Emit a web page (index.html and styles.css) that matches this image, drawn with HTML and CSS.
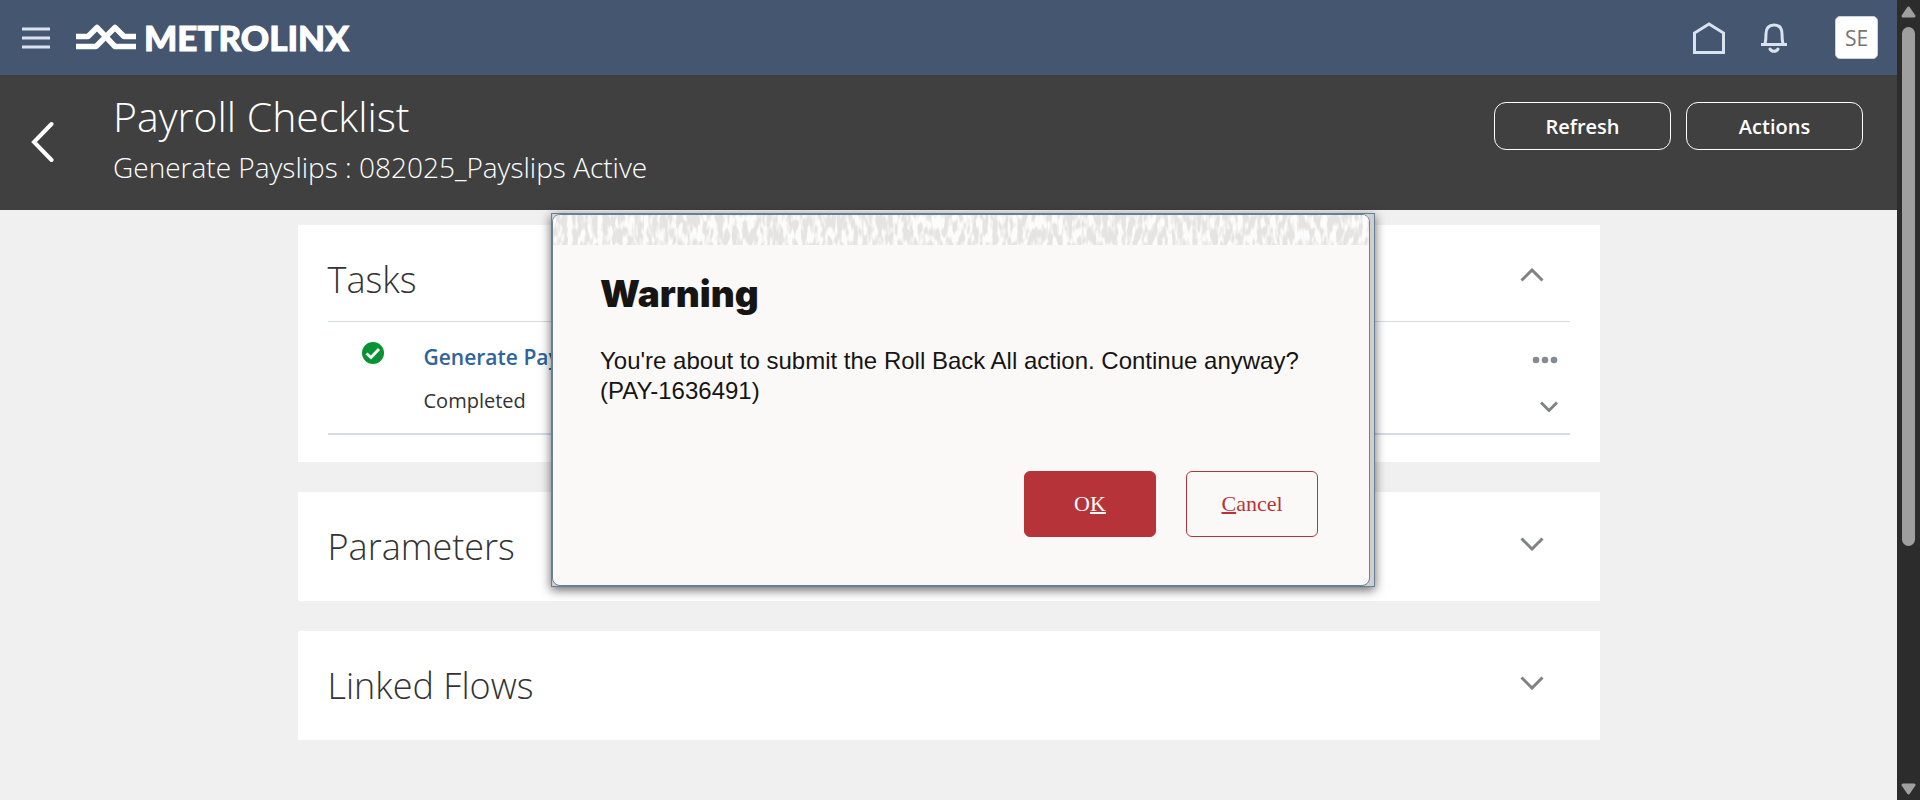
FILE: index.html
```html
<!DOCTYPE html>
<html lang="en">
<head>
<meta charset="utf-8">
<meta name="viewport" content="width=device-width, initial-scale=1">
<title>Payroll Checklist</title>
<link rel="stylesheet" href="styles.css">
</head>
<body>
<div class="page">
  <header class="topbar">
    <button class="icon-btn menu" aria-label="Navigator">
      <svg width="28" height="22" viewBox="0 0 28 22" stroke="#d9e2ef" stroke-width="3"><path d="M0 2h28M0 11h28M0 20h28"/></svg>
    </button>
    <a class="brand" href="#">
      <svg width="62" height="26" viewBox="0 0 62 26" fill="none" stroke="#fff" stroke-width="5.5" stroke-linejoin="round"><path d="M1 12.500H13L22 3.500L40 22.500H61"/><path d="M1 22.500H21L40 3.500L49 12.500H61"/></svg>
      <span>METROLINX</span>
    </a>
    <nav class="tools">
      <button class="icon-btn" aria-label="Home">
        <svg width="34" height="34" viewBox="0 0 34 34" fill="none" stroke="#d9e2ef" stroke-width="3"><path d="M2.500 31.500V12L17 3L31.500 12V31.500Z"/></svg>
      </button>
      <button class="icon-btn bell" aria-label="Notifications">
        <svg width="26" height="30" viewBox="0 0 26 30" fill="none" stroke="#d9e2ef" stroke-width="3"><path d="M0 21.500H26M4 21C5 17 5 15 5 11C5 5 8 2 13 2S21 5 21 11C21 15 21 17 22 21"/><path d="M9 26C10.500 29 15.500 29 17 26" stroke-linecap="round"/></svg>
      </button>
      <button class="avatar">SE</button>
    </nav>
  </header>
  <section class="titlebar">
    <button class="icon-btn back" aria-label="Back">
      <svg width="24" height="44" viewBox="0 0 24 44" fill="none" stroke="#fff" stroke-width="4" stroke-linecap="round"><path d="M21.500 4L4 22L21.500 40"/></svg>
    </button>
    <div class="titles">
      <h1>Payroll Checklist</h1>
      <p>Generate Payslips : 082025_Payslips Active</p>
    </div>
    <div class="actions">
      <button class="outline-btn">Refresh</button>
      <button class="outline-btn">Actions</button>
    </div>
  </section>
  <main class="cards">
    <section class="card tasks">
      <div class="card-head">
        <h2>Tasks</h2>
        <button class="icon-btn" aria-label="Collapse Tasks"><svg width="24" height="14" viewBox="0 0 24 14" class="chev"><path d="M1.500 12.500L12 2L22.500 12.500"/></svg></button>
      </div>
      <div class="task">
        <svg class="status" width="22" height="22" viewBox="0 0 22 22"><circle cx="11" cy="11" r="11" fill="#069334"/><path d="M4.500 11.500L9 15.500L17 7" fill="none" stroke="#fff" stroke-width="3"/></svg>
        <div class="task-text">
          <a href="#">Generate Payslips</a>
          <span>Completed</span>
        </div>
        <div class="task-tools">
          <button class="icon-btn" aria-label="Task actions"><svg width="26" height="8" viewBox="0 0 26 8" fill="#858b8f"><circle cx="4" cy="4" r="3.300"/><circle cx="13" cy="4" r="3.300"/><circle cx="22" cy="4" r="3.300"/></svg></button>
          <button class="icon-btn" aria-label="Show details"><svg width="18" height="12" viewBox="0 0 18 12" class="chev"><path d="M1 1.500L9 9.500L17 1.500"/></svg></button>
        </div>
      </div>
    </section>
    <section class="card">
      <div class="card-head">
        <h2>Parameters</h2>
        <button class="icon-btn" aria-label="Expand Parameters"><svg width="24" height="14" viewBox="0 0 24 14" class="chev"><path d="M1.500 1.500L12 12L22.500 1.500"/></svg></button>
      </div>
    </section>
    <section class="card">
      <div class="card-head">
        <h2>Linked Flows</h2>
        <button class="icon-btn" aria-label="Expand Linked Flows"><svg width="24" height="14" viewBox="0 0 24 14" class="chev"><path d="M1.500 1.500L12 12L22.500 1.500"/></svg></button>
      </div>
    </section>
  </main>
</div>
<div class="scrollbar" aria-hidden="true">
  <svg width="15" height="12" viewBox="0 0 15 12"><path d="M7.500 2L13 10H2Z" fill="#9f9f9f" stroke="#9f9f9f" stroke-width="3" stroke-linejoin="round"/></svg>
  <div class="track"><div class="thumb"></div></div>
  <svg width="15" height="12" viewBox="0 0 15 12"><path d="M7.500 10L13 2H2Z" fill="#9f9f9f" stroke="#9f9f9f" stroke-width="3" stroke-linejoin="round"/></svg>
</div>
<div class="dialog" role="alertdialog" aria-labelledby="dlg-title" aria-describedby="dlg-text">
  <div class="dialog-panel">
    <svg class="texture" width="100%" height="30" aria-hidden="true">
      <filter id="grain" x="0" y="0" width="100%" height="100%">
        <feTurbulence type="fractalNoise" baseFrequency="0.2 0.07" numOctaves="2" seed="4"/>
        <feColorMatrix values="0 0 0 0 0.98  0 0 0 0 0.975  0 0 0 0 0.97  5 0 0 0 -2.1"/>
      </filter>
      <rect width="100%" height="30" fill="#e5e4e3"/>
      <rect width="100%" height="30" filter="url(#grain)"/>
    </svg>
    <div class="dialog-body">
      <h2 id="dlg-title">Warning</h2>
      <p id="dlg-text">You're about to submit the Roll Back All action. Continue anyway? (PAY-1636491)</p>
      <div class="dialog-buttons">
        <button class="primary">O<u>K</u></button>
        <button class="secondary"><u>C</u>ancel</button>
      </div>
    </div>
  </div>
</div>
</body>
</html>
```

FILE: styles.css
```css
* { box-sizing: border-box; }
body {
  margin: 0;
  min-height: 100vh;
  display: flex;
  position: relative;
  background: #f0f0f0;
  color: #333;
  font-family: "Open Sans", "Noto Sans", sans-serif;
}
h1, h2, p { margin: 0; }
button { font: inherit; cursor: pointer; }
svg { display: block; }
.icon-btn { border: 0; padding: 0; background: none; }
.page { flex: 1; }

.topbar {
  display: flex;
  align-items: center;
  height: 75px;
  padding: 0 19px 0 22px;
  background: #455670;
}
.brand {
  display: flex;
  align-items: center;
  gap: 7px;
  margin-left: 25px;
  padding-bottom: 1px;
  color: #fff;
  font-family: Lato, sans-serif;
  font-size: 35px;
  font-weight: 900;
  line-height: 40px;
  text-decoration: none;
  -webkit-text-stroke: 1px #fff;
}
.tools { display: flex; align-items: center; margin-left: auto; }
.bell { margin: 0 48px 0 35px; }
.avatar {
  width: 43px;
  height: 43px;
  padding: 0;
  border: 1px solid #c9d3e0;
  border-radius: 5px;
  background: #fff;
  color: #757575;
  font-size: 21px;
}

.titlebar {
  display: flex;
  align-items: flex-start;
  height: 135px;
  padding-right: 34px;
  background: #404040;
  color: #fff;
}
.back { margin: 45px 0 0 30px; }
.titles { margin: 14px 0 0 59px; font-weight: 300; }
.titles h1 { font-size: 41px; line-height: 54px; font-weight: 300; }
.titles p { font-size: 28px; line-height: 48px; }
.actions { display: flex; gap: 15px; margin: 27px 0 0 auto; }
.outline-btn {
  width: 177px;
  height: 48px;
  border: 1px solid #fff;
  border-radius: 12px;
  background: none;
  color: #fff;
  font-size: 20px;
  font-weight: 600;
}

.cards {
  display: flex;
  flex-direction: column;
  gap: 30px;
  max-width: 1302px;
  margin: 15px auto 0;
}
.card { padding: 0 30px; background: #fff; }
.tasks { padding-bottom: 27px; }
.card-head {
  display: flex;
  align-items: center;
  justify-content: space-between;
  height: 109px;
  padding-right: 26px;
}
.card-head .icon-btn { margin-bottom: 6px; }
.card-head h2 { font-size: 36px; line-height: 50px; font-weight: 300; }
.tasks .card-head { height: 97px; border-bottom: 1px solid #d3dde6; }
.tasks .card-head .icon-btn { margin-top: 4px; margin-bottom: 0; }
.tasks .card-head h2 { margin-top: 14px; }
.chev { fill: none; stroke: #7f8386; stroke-width: 3; }
.task {
  display: flex;
  align-items: flex-start;
  height: 113px;
  padding-left: 34px;
  border-bottom: 2px solid #d3dde6;
}
.status { margin-top: 20px; }
.task-text {
  display: flex;
  flex-direction: column;
  gap: 14px;
  margin: 20px 0 0 40px;
  font-size: 20px;
  line-height: 30px;
}
.task-text a { color: #30649b; font-size: 21px; font-weight: 600; text-decoration: none; }
.task-tools {
  display: flex;
  flex-direction: column;
  align-items: flex-end;
  gap: 37px;
  margin: 34px 12px 0 auto;
}

.scrollbar {
  display: flex;
  flex-direction: column;
  align-items: center;
  width: 23px;
  padding: 6px 0 5px;
  background: #2c2c2c;
}
.track { flex: 1; padding-top: 9px; }
.thumb { width: 13px; height: 519px; border-radius: 7px; background: #9f9f9f; }

.dialog {
  position: absolute;
  top: 213px;
  left: 551px;
  width: 824px;
  padding-right: 4px;
  border: 1px solid #66809a;
  background: #cfcfcf;
  box-shadow: 0 3px 10px rgba(0, 0, 0, 0.6);
}
.dialog-panel {
  overflow: hidden;
  border: 1px solid #66809a;
  border-radius: 8px;
  background: #fbf9f8;
}
.dialog-body {
  padding: 27px 51px 48px 47px;
  color: #161513;
  font-family: "Liberation Sans", sans-serif;
}
.dialog-body h2 {
  font-family: Inter, sans-serif;
  font-size: 37px;
  line-height: 44px;
  font-weight: 900;
}
.dialog-body p { margin-top: 30px; font-size: 24px; line-height: 30px; }
.dialog-buttons {
  display: flex;
  justify-content: flex-end;
  gap: 30px;
  margin-top: 65px;
  font-family: "Liberation Serif", serif;
  font-size: 22px;
}
.dialog-buttons button {
  width: 132px;
  height: 66px;
  border: 1px solid #b63439;
  border-radius: 6px;
}
.primary { background: #b63439; color: #fff; }
.secondary { background: none; color: #b63439; }
.dialog-buttons u { text-decoration-thickness: 2px; }
```
